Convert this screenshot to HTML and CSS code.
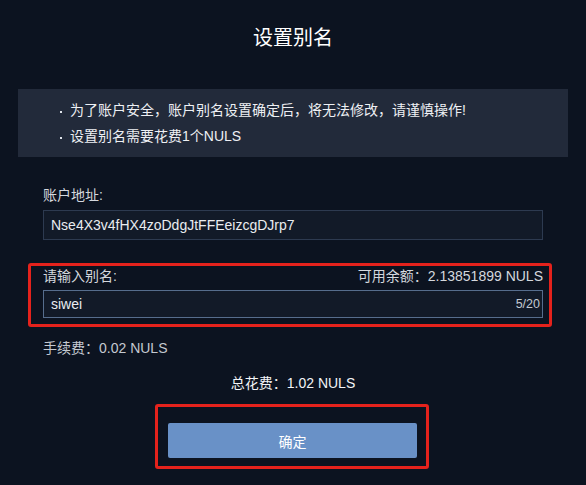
FILE: index.html
```html
<!DOCTYPE html>
<html lang="zh-CN">
<head>
<meta charset="utf-8">
<title>设置别名</title>
<link rel="stylesheet" href="styles.css">
</head>
<body>
<div class="page">
  <h2 class="title">设置别名</h2>
  <div class="notice">
    <div class="notice-line"><span class="dot"></span><span>为了账户安全，账户别名设置确定后，将无法修改，请谨慎操作!</span></div>
    <div class="notice-line"><span class="dot"></span><span>设置别名需要花费1个NULS</span></div>
  </div>
  <div class="form">
    <div class="field">
      <div class="label">账户地址:</div>
      <div class="input">Nse4X3v4fHX4zoDdgJtFFEeizcgDJrp7</div>
    </div>
    <div class="highlight alias">
      <div class="label-row">
        <span class="label">请输入别名:</span>
        <span class="balance">可用余额：2.13851899 NULS</span>
      </div>
      <div class="input focus">
        <span>siwei</span>
        <span class="count">5/20</span>
      </div>
    </div>
    <div class="fee">手续费：0.02 NULS</div>
    <div class="total">总花费：1.02 NULS</div>
    <div class="btn-wrap">
      <div class="highlight btn-box">
        <button class="btn">确定</button>
      </div>
    </div>
  </div>
</div>
</body>
</html>
```

FILE: styles.css
```css
* { box-sizing: border-box; }
html, body {
  margin: 0;
  padding: 0;
  background: #0c1320;
}
body {
  font-family: "Liberation Sans", "Noto Sans CJK SC", sans-serif;
  font-size: 14px;
  color: #e4e7ec;
  width: 586px;
  height: 485px;
  overflow: hidden;
}
.page {
  display: flex;
  flex-direction: column;
}
.title {
  margin: 0;
  padding-top: 24px;
  height: 89px;
  text-align: center;
  font-size: 20px;
  font-weight: normal;
  line-height: 28px;
  color: #ffffff;
}
.notice {
  margin: 0 18px;
  height: 68px;
  padding: 8px 0 8px 42px;
  background: #222a3a;
}
.notice-line {
  display: flex;
  align-items: center;
  line-height: 26px;
  color: #eef0f4;
}
.dot {
  width: 2px;
  height: 2px;
  margin-top: 3px;
  margin-right: 8px;
  background: #dfe3ea;
  flex: none;
}
.form {
  padding: 0 34px 0 28px;
  display: flex;
  flex-direction: column;
}
.field {
  padding: 0 9px 0 15px;
  margin-top: 28px;
}
.label {
  line-height: 20px;
  color: #d4d8de;
}
.input {
  margin-top: 5px;
  height: 30px;
  border: 1px solid #2d3a50;
  background: #121a28;
  padding: 0 7px;
  display: flex;
  align-items: center;
  justify-content: space-between;
  color: #e9ecf0;
}
.highlight {
  border: 3px solid #e5221c;
  border-radius: 3px;
}
.alias {
  margin-top: 23px;
  padding: 0 6px 6px 12px;
}
.label-row {
  display: flex;
  justify-content: space-between;
  line-height: 20px;
}
.balance { color: #d4d8de; }
.alias .input {
  margin-top: 4px;
  height: 28px;
  border-color: #566d8d;
  padding-right: 2px;
}
.count {
  font-size: 12.5px;
  color: #c3cad4;
}
.fee {
  margin-top: 11px;
  padding-left: 15px;
  line-height: 20px;
  color: #c4c9d1;
}
.total {
  margin-top: 15px;
  line-height: 20px;
  text-align: center;
  color: #f2f4f7;
  padding-left: 6px;
}
.btn-wrap {
  margin-top: 11px;
  display: flex;
  padding-left: 127px;
}
.btn-box {
  width: 274px;
  height: 65px;
  padding: 16px 9px 8px 10px;
}
.btn {
  display: block;
  width: 249px;
  height: 35px;
  border: none;
  border-radius: 2px;
  background: #6991c7;
  color: #ffffff;
  font-family: "Liberation Sans", "Noto Sans CJK SC", sans-serif;
  font-size: 14px;
  padding: 0;
}
```
